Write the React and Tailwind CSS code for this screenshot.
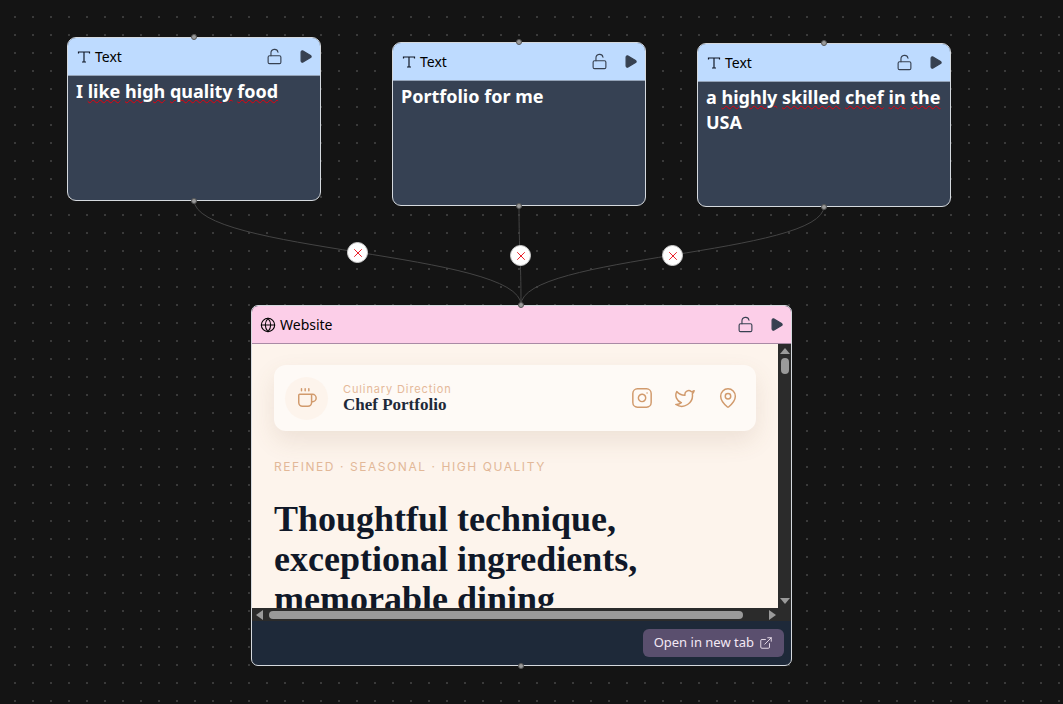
import React from 'react';
import { ExternalLink, Globe, Instagram, LockOpen, MapPin, Coffee, Play, Twitter, X } from 'lucide-react';

// --- Canvas data ---
const TEXT_NODES = [
  { id: 1, pos: 'left-[67px] top-[37px]', words: ['I', 'like', 'high', 'quality', 'food'], plain: ['I'] },
  { id: 2, pos: 'left-[392px] top-[42px]', words: ['Portfolio', 'for', 'me'], plain: ['Portfolio', 'for', 'me'] },
  { id: 3, pos: 'left-[697px] top-[43px]', words: ['a', 'highly', 'skilled', 'chef', 'in', 'the', 'USA'], plain: ['a', 'USA'] },
];

const EDGES = [
  { d: 'M194 200 C194 252 521 252 521 305' },
  { d: 'M519 205 C519 255 521 255 521 305' },
  { d: 'M824 206 C824 255 521 255 521 305' },
];

const DELETE_BUTTONS = [
  { id: 1, pos: 'left-[347px] top-[242px]' },
  { id: 2, pos: 'left-[510px] top-[245px]' },
  { id: 3, pos: 'left-[662px] top-[245px]' },
];

function TextGlyph() {
  return (
    <svg width="14" height="14" viewBox="0 0 14 14" fill="none" stroke="#111827" strokeWidth="1.2">
      <path d="M1.5 3.5V2h11v1.5M7 2v10M5 12h4" />
    </svg>
  );
}

function Handle({ className }) {
  return <div className={`absolute w-[6px] h-[6px] rounded-full bg-[#9a9a9a] border border-[#555] ${className}`} />;
}

function NodeActions() {
  return (
    <div className="flex items-center gap-[15px] text-[#374151]">
      <LockOpen size={17} strokeWidth={1.6} />
      <Play size={15} fill="currentColor" strokeWidth={2} />
    </div>
  );
}

function TextNode({ node }) {
  return (
    <div className={`absolute ${node.pos} w-[254px] h-[164px] rounded-[9px] border-[1.5px] border-[#d5d9de] bg-gray-700`}>
      <Handle className="left-[123px] -top-[4px]" />
      <Handle className="left-[123px] -bottom-[4px]" />
      <div className="flex items-center justify-between h-[38px] pl-[9px] pr-[7px] bg-blue-200 rounded-t-[8px] border-b border-[#94a3b8]">
        <div className="flex items-center gap-[4px] text-[14px] text-black">
          <TextGlyph />
          <span>Text</span>
        </div>
        <NodeActions />
      </div>
      <div className="px-[8px] pt-[3px] text-[18px] leading-[25px] font-bold text-white">
        {node.words.map((word, i) => (
          <span key={i}>
            <span className={node.plain.includes(word) ? '' : 'underline decoration-wavy decoration-red-600 decoration-1'}>{word}</span>{' '}
          </span>
        ))}
      </div>
    </div>
  );
}

function SitePreview() {
  return (
    <div className="h-[264px] overflow-hidden bg-[#fdf4ec] px-[22px] pt-[21px] font-['Inter',sans-serif]">
      <div className="flex items-center justify-between h-[66px] pl-[11px] pr-[7px] rounded-[12px] bg-[#fefaf6] shadow-[0_10px_25px_rgba(120,90,60,0.12)]">
        <div className="flex items-center gap-[15px]">
          <div className="flex items-center justify-center w-[43px] h-[43px] rounded-full bg-[#fdf4ec] text-[#d19a6c]">
            <Coffee size={22} strokeWidth={1.6} />
          </div>
          <div>
            <div className="text-[11px] leading-[13px] tracking-[0.08em] text-[#e5b999]">Culinary Direction</div>
            <div className="font-['Liberation_Serif',serif] font-bold text-[17px] leading-[18px] text-gray-800">Chef Portfolio</div>
          </div>
        </div>
        <div className="flex items-center text-[#d19a6c]">
          <div className="flex items-center justify-center w-[43px] h-[36px]"><Instagram size={22} strokeWidth={1.6} /></div>
          <div className="flex items-center justify-center w-[43px] h-[36px]"><Twitter size={22} strokeWidth={1.6} /></div>
          <div className="flex items-center justify-center w-[43px] h-[36px]"><MapPin size={22} strokeWidth={1.6} /></div>
        </div>
      </div>
      <p className="mt-[28px] text-[12px] leading-[16px] tracking-[0.13em] text-[#e2b898]">REFINED · SEASONAL · HIGH QUALITY</p>
      <h1 className="mt-[24px] w-[420px] font-['Liberation_Serif',serif] font-bold text-[36px] leading-[40px] text-gray-900">
        Thoughtful technique, exceptional ingredients, memorable dining
      </h1>
    </div>
  );
}

function WebsiteNode() {
  return (
    <div className="absolute left-[251px] top-[305px] w-[541px] h-[361px] flex flex-col rounded-[7px] border-[1.5px] border-[#d5d9de] bg-gray-800">
      <Handle className="left-[266px] -top-[4px]" />
      <Handle className="left-[266px] -bottom-[4px]" />
      <div className="flex items-center justify-between h-[38px] shrink-0 pl-[8px] pr-[7px] bg-pink-200 rounded-t-[6px] border-b border-[#a98aa5]">
        <div className="flex items-center gap-[4px] text-[14px] text-black">
          <Globe size={16} strokeWidth={1.6} />
          <span>Website</span>
        </div>
        <NodeActions />
      </div>
      <div className="flex h-[264px] shrink-0">
        <div className="flex-1 min-w-0"><SitePreview /></div>
        <div className="flex flex-col items-center justify-between w-[13px] py-[4px] bg-[#2b2b2b]">
          <div className="flex flex-col items-center gap-[4px]">
            <div className="w-0 h-0 border-x-[5px] border-x-transparent border-b-[6px] border-b-[#9a9a9a]" />
            <div className="w-[8px] h-[16px] rounded-full bg-[#9a9a9a]" />
          </div>
          <div className="w-0 h-0 border-x-[5px] border-x-transparent border-t-[6px] border-t-[#9a9a9a]" />
        </div>
      </div>
      <div className="flex items-center h-[13px] shrink-0 pl-[4px] pr-[15px] bg-[#2b2b2b]">
        <div className="w-0 h-0 border-y-[5px] border-y-transparent border-r-[7px] border-r-[#9a9a9a]" />
        <div className="ml-[6px] w-[474px] h-[8px] rounded-full bg-[#9a9a9a]" />
        <div className="ml-auto w-0 h-0 border-y-[5px] border-y-transparent border-l-[7px] border-l-[#9a9a9a]" />
      </div>
      <div className="flex flex-1 items-center justify-end pr-[7px]">
        <button className="flex items-center gap-[5px] h-[28px] px-[11px] rounded-[6px] bg-[#5a4f6e] text-[13px] text-[#f3e8f4]">
          Open in new tab
          <ExternalLink size={14} strokeWidth={1.5} />
        </button>
      </div>
    </div>
  );
}

export default function App() {
  return (
    <div className="relative w-[1063px] h-[704px] overflow-hidden bg-[#141414] font-['Noto_Sans',sans-serif] bg-[radial-gradient(#3a3a3a_0.8px,transparent_1px)] bg-[size:18px_18px] bg-[position:6px_8px]">
      <svg className="absolute inset-0" width="1063" height="704" fill="none">
        {EDGES.map((edge, i) => (
          <path key={i} d={edge.d} stroke="#444" strokeWidth="1" />
        ))}
      </svg>
      {TEXT_NODES.map(node => (
        <TextNode key={node.id} node={node} />
      ))}
      <WebsiteNode />
      {DELETE_BUTTONS.map(btn => (
        <div key={btn.id} className={`absolute ${btn.pos} flex items-center justify-center w-[21px] h-[21px] rounded-full bg-white border border-[#ccc] text-red-600`}>
          <X size={14} strokeWidth={1.5} />
        </div>
      ))}
    </div>
  );
}
